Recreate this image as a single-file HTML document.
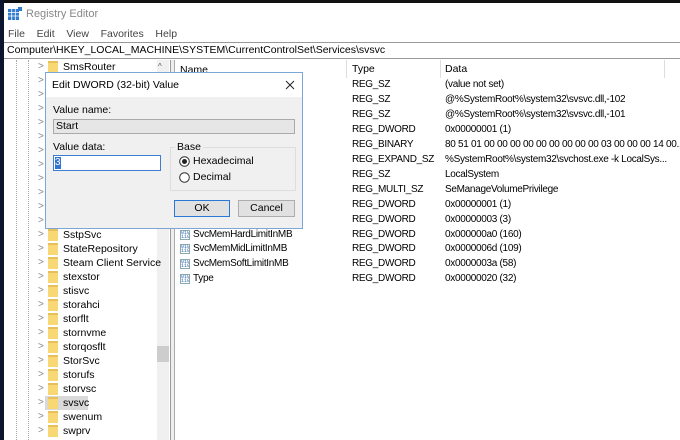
<!DOCTYPE html>
<html><head><style>
*{margin:0;padding:0;box-sizing:border-box}
body{width:680px;height:440px;overflow:hidden;background:#fff;font-family:"Liberation Sans",sans-serif;font-size:10.5px;color:#000;position:relative}
.a{position:absolute;white-space:nowrap}
.l{font-size:10px;letter-spacing:-0.3px}
.fold{position:absolute;width:10px;height:12px;background:#f8d775;border-top:2px solid #e8c05a}
.chev{position:absolute;color:#888;font-size:10px}
.ic{position:absolute;width:10px;height:10px;border:1px solid #8aa;background:#fff;font-size:5px;line-height:4px;color:#2a5db0;font-family:"Liberation Mono",monospace;overflow:hidden;text-align:center}
</style></head><body>
<div class="a" style="left:0;top:0;width:680px;height:3px;background:#111"></div>
<div class="a" style="left:0;top:0;width:4px;height:440px;background:#0b1530"></div>
<svg class="a" style="left:8px;top:7px" width="14" height="14"><rect x="0" y="2" width="11" height="11" fill="#2e7bd0"/><path d="M0 5.5h11M0 9h11M3.7 2v11M7.3 2v11" stroke="#fff" stroke-width="0.8"/><rect x="10" y="0" width="4" height="4" fill="#2e7bd0"/></svg>
<div class="a" style="left:26px;top:8px;font-size:11px;color:#888">Registry Editor</div>
<div class="a" style="left:8px;top:28px;color:#444">File&nbsp;&nbsp;&nbsp; Edit&nbsp;&nbsp;&nbsp; View&nbsp;&nbsp;&nbsp; Favorites&nbsp;&nbsp;&nbsp; Help</div>
<div class="a" style="left:4px;top:42px;width:676px;height:17px;border-top:1px solid #999;border-bottom:1px solid #999"></div>
<div class="a" style="left:7px;top:44px;font-size:10.5px">Computer\HKEY_LOCAL_MACHINE\SYSTEM\CurrentControlSet\Services\svsvc</div>
<div class="a" style="left:16px;top:60px;height:380px;border-left:1px dotted #aaa"></div>
<div class="a" style="left:28px;top:60px;height:380px;border-left:1px dotted #aaa"></div>
<div class="a" style="left:157px;top:60px;width:12px;height:380px;background:#f0f0f0"></div>
<div class="a" style="left:158px;top:62px;font-size:8px;color:#555">^</div>
<div class="a" style="left:157px;top:346px;width:12px;height:16px;background:#cdcdcd"></div>
<div class="a" style="left:170px;top:60px;width:1px;height:380px;background:#999"></div>
<div class="a" style="left:171px;top:60px;width:3px;height:380px;background:#eee"></div>
<div class="a" style="left:174px;top:60px;width:1px;height:380px;background:#aaa"></div>
<div class="a" style="left:45px;top:396px;width:43px;height:14px;background:#d9d9d9"></div>
<div id="tree"></div>
<script>
var n=["SmsRouter","","","","","","","","","","","","SstpSvc","StateRepository","Steam Client Service","stexstor","stisvc","storahci","storflt","stornvme","storqosflt","StorSvc","storufs","storvsc","svsvc","swenum","swprv"];
var h="";
for(var i=0;i<n.length;i++){var y=60+i*14;
h+='<div class="chev" style="left:38px;top:'+(y+1)+'px">&gt;</div><div class="fold" style="left:48px;top:'+(y+1)+'px"></div><div class="a" style="left:63px;top:'+(y+1)+'px">'+n[i]+'</div>';}
document.getElementById('tree').innerHTML=h;
</script>
<div class="a" style="left:180px;top:64px">Name</div>
<div class="a" style="left:346px;top:60px;width:1px;height:18px;background:#ddd"></div>
<div class="a" style="left:352px;top:63px">Type</div>
<div class="a" style="left:440px;top:60px;width:1px;height:18px;background:#ddd"></div>
<div class="a" style="left:445px;top:63px">Data</div>
<div class="a" style="left:664px;top:60px;width:1px;height:18px;background:#ddd"></div>
<div id="list"></div>
<script>
var t=["REG_SZ","REG_SZ","REG_SZ","REG_DWORD","REG_BINARY","REG_EXPAND_SZ","REG_SZ","REG_MULTI_SZ","REG_DWORD","REG_DWORD","REG_DWORD","REG_DWORD","REG_DWORD","REG_DWORD"];
var d=["(value not set)","@%SystemRoot%\\system32\\svsvc.dll,-102","@%SystemRoot%\\system32\\svsvc.dll,-101","0x00000001 (1)","80 51 01 00 00 00 00 00 00 00 00 00 03 00 00 00 14 00...","%SystemRoot%\\system32\\svchost.exe -k LocalSys...","LocalSystem","SeManageVolumePrivilege","0x00000001 (1)","0x00000003 (3)","0x000000a0 (160)","0x0000006d (109)","0x0000003a (58)","0x00000020 (32)"];
var nm={10:"SvcMemHardLimitInMB",11:"SvcMemMidLimitInMB",12:"SvcMemSoftLimitInMB",13:"Type"};
var h="";
for(var i=0;i<14;i++){var y=79+i*14.95;
h+='<div class="a l" style="left:352px;top:'+y+'px">'+t[i]+'</div><div class="a l" style="left:445px;top:'+y+'px">'+d[i]+'</div>';
if(nm[i])h+='<div class="ic" style="left:180px;top:'+(y+1)+'px">010<br>110</div><div class="a l" style="left:193px;top:'+y+'px">'+nm[i]+'</div>';}
document.getElementById('list').innerHTML=h;
</script>
<div class="a" style="left:45px;top:72px;width:258px;height:157px;background:#f0f0f0;border:1px solid #7aa7d8"></div>
<div class="a" style="left:46px;top:73px;width:256px;height:24px;background:#fff"></div>
<div class="a" style="left:52px;top:79px">Edit DWORD (32-bit) Value</div>
<svg class="a" style="left:285px;top:80px" width="10" height="10"><path d="M1 1L9 9M9 1L1 9" stroke="#222" stroke-width="1"/></svg>
<div class="a" style="left:53px;top:104px">Value name:</div>
<div class="a" style="left:53px;top:119px;width:242px;height:15px;background:#e6e6e6;border:1px solid #aaa"></div>
<div class="a" style="left:56px;top:120px">Start</div>
<div class="a" style="left:53px;top:141px">Value data:</div>
<div class="a" style="left:53px;top:155px;width:108px;height:16px;background:#fff;border:1px solid #3c7fd0"></div>
<div class="a" style="left:55px;top:157px;width:6px;height:12px;background:#3073d0;color:#fff;font-size:10px;line-height:12px">3</div>
<div class="a" style="left:170px;top:147px;width:126px;height:44px;border:1px solid #ddd"></div>
<div class="a" style="left:175px;top:141px;background:#f0f0f0;padding:0 2px">Base</div>
<svg class="a" style="left:179px;top:156px" width="11" height="11"><circle cx="5.5" cy="5.5" r="4.8" fill="#fff" stroke="#333"/><circle cx="5.5" cy="5.5" r="2.5" fill="#222"/></svg>
<div class="a" style="left:193px;top:155px">Hexadecimal</div>
<svg class="a" style="left:179px;top:172px" width="11" height="11"><circle cx="5.5" cy="5.5" r="4.8" fill="#fff" stroke="#333"/></svg>
<div class="a" style="left:193px;top:171px">Decimal</div>
<div class="a" style="left:174px;top:200px;width:56px;height:17px;background:#e1e1e1;border:1px solid #2a78d6;text-align:center;line-height:15px">OK</div>
<div class="a" style="left:238px;top:200px;width:57px;height:17px;background:#e1e1e1;border:1px solid #adadad;text-align:center;line-height:15px">Cancel</div>
</body></html>
